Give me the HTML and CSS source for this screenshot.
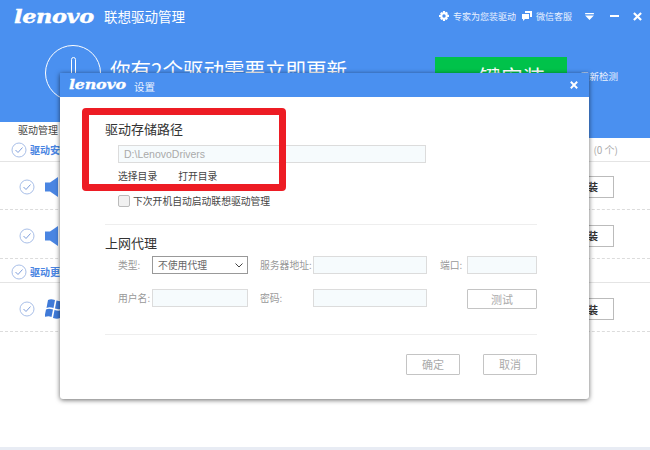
FILE: index.html
```html
<!DOCTYPE html>
<html lang="zh">
<head>
<meta charset="utf-8">
<title>联想驱动管理</title>
<link rel="stylesheet" href="styles.css">
</head>
<body>
<div class="app">
  <header class="head">
    <div class="topbar">
      <span class="logo">lenovo</span>
      <span class="app-title">联想驱动管理</span>
      <span class="top-item top-first">
        <svg class="ic" viewBox="0 0 10 10"><path fill="#fff" d="M4 0h2l.3 1.400 1.200-.7 1.400 1.400-.7 1.200L10 4v2l-1.800.1.700 1.400-1.400 1.400-1.200-.7L6 10H4l-.3-1.800-1.200.7-1.400-1.400.7-1.200L0 6V4l1.800-.3-.7-1.200 1.400-1.400 1.200.7zM5 3.300a1.700 1.700 0 1 0 0 3.400 1.700 1.700 0 0 0 0-3.400z" fill-rule="evenodd"/></svg>
        专家为您装驱动
      </span>
      <span class="top-item top-second">
        <svg class="ic" viewBox="0 0 10 10"><path fill="#fff" d="M3 0h7v6H8V2H3z"/><path fill="#fff" d="M0 3h7v5H3L1 10V8H0z"/></svg>
        微信客服
      </span>
      <svg class="win-menu" viewBox="0 0 10 8"><path fill="#fff" d="M0 0h10v1.300H0zM0 2.800h10L5 8z"/></svg>
      <span class="win-min"></span>
      <svg class="win-close" viewBox="0 0 10 10"><path stroke="#fff" stroke-width="2.400" d="M1 1l8 8M9 1L1 9"/></svg>
    </div>
    <div class="hero">
      <div class="alert-ring"><span class="alert-bar"></span></div>
      <div class="hero-text">你有2个驱动需要立即更新</div>
      <div class="install-all">一键安装</div>
      <div class="recheck">重新检测</div>
    </div>
  </header>
  <nav class="tabs"><span class="tab">驱动管理</span></nav>

  <div class="section section-a">
    <svg class="check-s" viewBox="0 0 16 16"><circle cx="8" cy="8" r="7" fill="none" stroke="#a9bfe8"/><path fill="none" stroke="#7f9fdc" d="M4.500 8l2.500 2.500 4.500-5"/></svg>
    <span class="section-name">驱动安装</span>
    <span class="section-count">(0 个)</span>
  </div>
  <div class="row row-a">
    <svg class="check" viewBox="0 0 16 16"><circle cx="8" cy="8" r="7" fill="none" stroke="#a9bfe8"/><path fill="none" stroke="#7f9fdc" d="M4.500 8l2.500 2.500 4.500-5"/></svg>
    <svg class="device" viewBox="0 0 22 22"><path fill="#4a85e2" d="M0 6.500h5L13 1v20l-8-5.500H0z"/></svg>
    <button class="install">安装</button>
  </div>
  <div class="row row-b">
    <svg class="check" viewBox="0 0 16 16"><circle cx="8" cy="8" r="7" fill="none" stroke="#a9bfe8"/><path fill="none" stroke="#7f9fdc" d="M4.500 8l2.500 2.500 4.500-5"/></svg>
    <svg class="device" viewBox="0 0 22 22"><path fill="#4a85e2" d="M0 6.500h5L13 1v20l-8-5.500H0z"/></svg>
    <button class="install">安装</button>
  </div>
  <div class="section section-b">
    <svg class="check-s" viewBox="0 0 16 16"><circle cx="8" cy="8" r="7" fill="none" stroke="#a9bfe8"/><path fill="none" stroke="#7f9fdc" d="M4.500 8l2.500 2.500 4.500-5"/></svg>
    <span class="section-name">驱动更新</span>
  </div>
  <div class="row row-c">
    <svg class="check" viewBox="0 0 16 16"><circle cx="8" cy="8" r="7" fill="none" stroke="#a9bfe8"/><path fill="none" stroke="#7f9fdc" d="M4.500 8l2.500 2.500 4.500-5"/></svg>
    <svg class="device" viewBox="0 0 22 22"><path fill="#3f7ad8" d="M3 2c2-1 4-1 7 0l-1.500 8c-3-1-5-1-7 0zM11.500 2.500c3 1 5 1 7 0L17 10.500c-2 1-4 1-7 0zM1 11.500c2-1 4-1 7 0L6.500 19c-2-1-4-1-7 0zM9.500 12c3 1 5 1 7 0L15 20c-2 1-4 1-7 0z"/></svg>
    <button class="install">安装</button>
  </div>
  <div class="foot-strip"></div>
</div>

<section class="dialog">
  <div class="dialog-head">
    <span class="logo logo-small">lenovo</span>
    <span class="dialog-title">设置</span>
    <svg class="dialog-close" viewBox="0 0 10 10"><path stroke="#fff" stroke-width="2.400" d="M1 1l8 8M9 1L1 9"/></svg>
  </div>
  <div class="dialog-body">
    <h2 class="group-title">驱动存储路径</h2>
    <div class="indent">
      <div class="field path-field">D:\LenovoDrivers</div>
      <div class="links"><span>选择目录</span><span>打开目录</span></div>
      <label class="auto-start"><span class="checkbox"></span>下次开机自动启动联想驱动管理</label>
    </div>
    <hr class="rule rule-a">
    <h2 class="group-title proxy-title">上网代理</h2>
    <div class="proxy-grid">
      <span class="lbl">类型:</span>
      <div class="select">不使用代理<svg class="chev" viewBox="0 0 8 5"><path fill="none" stroke="#444" d="M.5.500L4 4 7.500.500"/></svg></div>
      <span class="lbl lbl-mid">服务器地址:</span>
      <div class="field"></div>
      <span class="lbl lbl-port">端口:</span>
      <div class="field"></div>

      <span class="lbl">用户名:</span>
      <div class="field"></div>
      <span class="lbl lbl-mid">密码:</span>
      <div class="field"></div>
      <span></span>
      <div class="btn btn-test">测试</div>
    </div>
    <hr class="rule rule-b">
    <div class="actions">
      <div class="btn btn-act">确定</div>
      <div class="btn btn-act">取消</div>
    </div>
  </div>
</section>

<div class="annotation"></div>
</body>
</html>
```

FILE: styles.css
```css
* { box-sizing: border-box; }
html, body { margin: 0; padding: 0; }
body {
  width: 650px;
  height: 450px;
  overflow: hidden;
  position: relative;
  background: #fff;
  font-family: "Noto Sans CJK SC", "Liberation Sans", sans-serif;
  color: #333;
}
.app { height: 450px; display: flex; flex-direction: column; }
.head { background: #4a90f0; height: 122px; color: #fff; }
.topbar { display: flex; align-items: center; height: 32px; padding-left: 14px; }
.logo {
  font-family: "DejaVu Serif", serif;
  font-weight: 700;
  font-style: italic;
  font-size: 19px;
  line-height: 1;
  letter-spacing: -.3px;
  color: #fff;
  width: 81px;
  white-space: nowrap;
  transform: scaleX(1.18);
  transform-origin: left center;
  -webkit-text-stroke: .4px #fff;
}
.app-title { font-size: 13.500px; margin-left: 9px; line-height: 32px; }
.top-item { font-size: 9px; display: flex; align-items: center; gap: 4px; color: #eaf2ff; }
.top-first { margin-left: auto; }
.top-second { margin-left: 6px; }
.ic { width: 10px; height: 10px; }
.win-menu { width: 9px; height: 7px; margin-left: 13px; }
.win-min { width: 9px; height: 2px; background: #fff; margin-left: 16px; }
.win-close { width: 9px; height: 9px; margin-left: 14px; margin-right: 8px; }

.hero { display: flex; height: 90px; position: relative; padding-left: 45px; }
.alert-ring {
  width: 56px;
  height: 56px;
  margin-top: 13px;
  border: 1.500px solid #fff;
  border-radius: 50%;
  display: flex;
  justify-content: center;
}
.alert-bar { width: 5px; height: 30px; margin-top: 11px; border: 1px solid #fff; border-radius: 3px; }
.hero-text { font-size: 20.500px; line-height: 28px; margin-left: 9px; margin-top: 23px; white-space: nowrap; }
.install-all {
  position: absolute;
  left: 435px;
  top: 25px;
  width: 132px;
  height: 60px;
  background: #00c24a;
  font-size: 22px;
  line-height: 38px;
  text-align: center;
}
.recheck { position: absolute; left: 580px; top: 37px; font-size: 9.500px; line-height: 14px; color: #eaf2ff; }

.tabs { height: 16px; background: #4a90f0; display: flex; }
.tab { background: #fff; width: 90px; padding-left: 18px; font-size: 10px; line-height: 16px; color: #444; }

.section { display: flex; align-items: center; border-bottom: 1px solid #e4e4e4; padding-left: 11px; height: 24px; }
.section-b { padding-top: 2px; }
.check-s { width: 16px; height: 16px; }
.section-name { font-size: 10px; font-weight: 700; color: #4a85e2; margin-left: 3px; }
.section-count { margin-left: auto; margin-right: 32px; font-size: 10px; color: #aaa; }

.row { display: flex; align-items: center; padding-left: 19px; border-bottom: 1px dashed #dcdcdc; }
.row-a { height: 48px; padding-top: 2px; }
.row-b { height: 49px; padding-top: 3px; }
.row-c { height: 49px; padding-top: 4px; }
.check { width: 16px; height: 16px; }
.device { width: 22px; height: 22px; margin-left: 10px; }
.install {
  margin-left: auto;
  margin-right: 36px;
  width: 52px;
  height: 22px;
  padding: 0;
  background: #fff;
  border: 1px solid #bbb;
  font: 700 10px "Noto Sans CJK SC", sans-serif;
  color: #333;
}
.foot-strip { margin-top: auto; height: 3px; background: #e8ecf4; }

.dialog {
  position: absolute;
  left: 60px;
  top: 73px;
  width: 529px;
  height: 326px;
  background: #fff;
  border-radius: 0 0 3px 3px;
  box-shadow: 0 1px 5px rgba(0, 0, 0, .6);
}
.dialog-head { display: flex; align-items: center; height: 24px; background: #4a90f0; padding-left: 9px; color: #fff; }
.logo-small { font-size: 13.500px; letter-spacing: -.2px; width: 57px; -webkit-text-stroke: .3px #fff; }
.dialog-title { font-size: 10.500px; margin-left: 8px; color: #eaf2ff; padding-top: 2px; }
.dialog-close { width: 8px; height: 8px; margin-left: auto; margin-right: 11px; }
.dialog-body { padding: 22px 52px 0 45px; }
.group-title { margin: 0; font-size: 13px; font-weight: 400; line-height: 20px; color: #333; }
.indent { padding-left: 13px; }
.field { height: 18px; background: #f6fbfd; border: 1px solid #dcdcdc; }
.path-field { width: 308px; margin-top: 6px; padding-left: 5px; font-size: 10.500px; line-height: 16px; color: #aaa; font-family: "Liberation Sans", sans-serif; }
.links { display: flex; gap: 21px; margin-top: 6px; font-size: 9.800px; line-height: 14px; color: #444; }
.auto-start { display: flex; align-items: center; gap: 3px; margin-top: 11px; font-size: 9.800px; line-height: 14px; color: #444; }
.checkbox { width: 12px; height: 12px; background: #f1f1f1; border: 1px solid #bbb; border-radius: 2px; }
.rule { margin: 0; border: 0; border-top: 1px solid #eee; }
.rule-a { margin-top: 16px; }
.proxy-title { margin-top: 8px; }
.proxy-grid {
  display: grid;
  grid-template-columns: 34px 96px 65px 114px 40px 70px;
  grid-template-rows: 18px 20px;
  row-gap: 15px;
  margin-top: 3px;
  padding-left: 13px;
  align-items: start;
}
.lbl { font-size: 9.800px; line-height: 18px; color: #999; white-space: nowrap; }
.lbl-mid { padding-left: 12px; }
.lbl-port { padding-left: 13px; }
.select {
  height: 18px;
  border: 1px solid #999;
  background: #fff;
  padding: 0 4px 0 5px;
  font-size: 9.800px;
  line-height: 15px;
  color: #666;
  display: flex;
  justify-content: space-between;
  align-items: center;
}
.chev { width: 8px; height: 5px; }
.btn { border: 1px solid #c4c4c4; border-radius: 1px; text-align: center; font-size: 11px; color: #aaa; background: #fff; }
.btn-test { height: 20px; line-height: 18px; }
.rule-b { margin-top: 25px; }
.actions { display: flex; justify-content: flex-end; gap: 23px; margin-top: 19px; }
.btn-act { width: 54px; height: 21px; line-height: 19px; }

.annotation {
  position: absolute;
  left: 82px;
  top: 108px;
  width: 204px;
  height: 83px;
  border: 7px solid #ed1c24;
  border-radius: 4px;
}
```
